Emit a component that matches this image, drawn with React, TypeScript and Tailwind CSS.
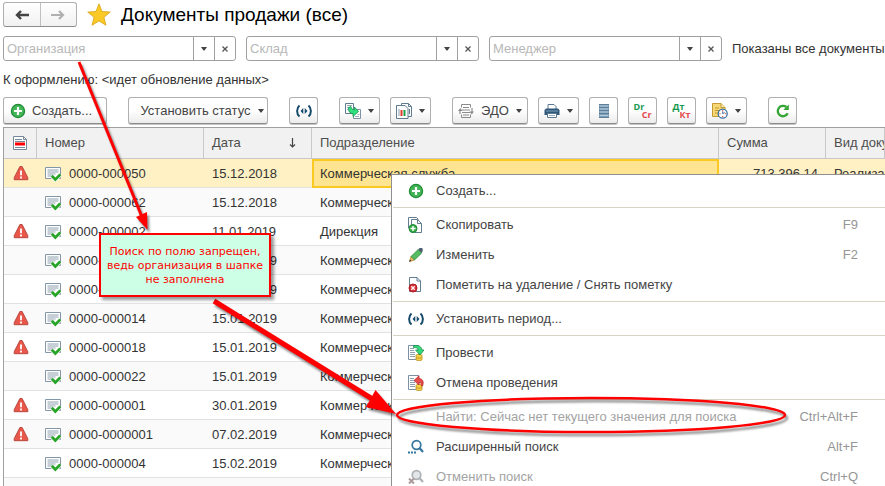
import React from "react";

type IconProps = { className?: string };

function Plus({ className = "size-4" }: IconProps) {
  return (
    <svg viewBox="0 0 16 16" className={className} aria-hidden="true">
      <circle cx="8" cy="8" r="6.6" fill="#43b556" stroke="#1f8b35" strokeWidth="1.2" />
      <path d="M8 4v8M4 8h8" stroke="#fff" strokeWidth="2.2" />
    </svg>
  );
}

function Period({ className = "size-4" }: IconProps) {
  return (
    <svg viewBox="0 0 16 16" className={className} aria-hidden="true">
      <path d="M3.5 2.500C.3 5.200.3 10.800 3.500 13.500M12.500 2.500C15.700 5.200 15.700 10.800 12.500 13.500" fill="none" stroke="#154a6b" strokeWidth="2" />
      <path d="M7.300 5v6L4.500 8zM8.700 5v6L11.500 8z" fill="#154a6b" />
    </svg>
  );
}

function CreateFrom() {
  return (
    <svg viewBox="0 0 16 16" className="size-4" aria-hidden="true">
      <path d="M.5.500h8v10h-8z" fill="#fff" stroke="#5f7c92" />
      <path d="M2 2.500h5M2 4.500h3M2 6.500h1" stroke="#9aabb9" />
      <path d="M8.500 6.500h7v9h-7z" fill="#fff" stroke="#7d93a5" />
      <path d="M10 13.500h4M12.500 11.500h2" stroke="#9aabb9" />
      <path d="M3.500 4.500c0 4 1 6 4.500 6v3l5.500-5L9.500 4v2.700C7.500 6.700 6 6 6 3.500z" fill="#2fe07c" stroke="#14914c" strokeWidth=".8" />
    </svg>
  );
}

function Reports() {
  return (
    <svg viewBox="0 0 16 16" className="size-4" aria-hidden="true">
      <path d="M5.500.500h7l3 3v10h-10z" fill="#fff" stroke="#5f7c92" />
      <path d="M12.500.500v3h3M13.500 6v5" fill="none" stroke="#5f7c92" />
      <path d="M.5 2.500h8.500l3 3v10H.5z" fill="#fff" stroke="#5f7c92" />
      <path d="M3 6v7" stroke="#8a9aa8" />
      <path d="M5.500 7v6" stroke="#e23b2e" strokeWidth="2" />
      <path d="M8.500 7v6" stroke="#1f9e49" strokeWidth="2" />
    </svg>
  );
}

function Exchange() {
  return (
    <svg viewBox="0 0 16 16" className="size-4" aria-hidden="true">
      <path d="M3.500 4.500v-3h9v3M12.500 11.500v3h-9v-3" fill="none" stroke="#8b8b8b" />
      <path d="M5 4.500h6M4 7h8M4 9.500h8M5 12h6" stroke="#8b8b8b" />
      <path d="M2 11V7.500M14 5v4" stroke="#8b8b8b" strokeWidth="1.200" />
      <path d="M0 8l2.300-3L4.600 8zM11.500 8.500h4.500l-2.200 3z" fill="#8b8b8b" />
    </svg>
  );
}

function Printer() {
  return (
    <svg viewBox="0 0 16 16" className="size-4" aria-hidden="true">
      <path d="M4 6V1.500h6l2 2V6" fill="#fff" stroke="#5b7a92" />
      <path d="M2 5.500h12l1.500 1.500v5h-15V7z" fill="#2f587a" />
      <path d="M2 8h12" stroke="#7fa0b8" />
      <path d="M3.500 10.500h9v4h-9z" fill="#fff" stroke="#5b7a92" />
      <path d="M5 12.500h6" stroke="#9aabb9" />
    </svg>
  );
}

function Registry() {
  return (
    <svg viewBox="0 0 16 16" className="size-4" aria-hidden="true">
      <path d="M3 1h10v14H3z" fill="#7d9fb8" />
      <path d="M3 1.500h10M3 4.500h10M3 7.500h10M3 10.500h10M3 14.500h10" stroke="#5b7f9a" />
      <path d="M4 3h8M4 6h8M4 9h8M4 12.500h8" stroke="#b5cbda" />
    </svg>
  );
}

function Schedule() {
  return (
    <svg viewBox="0 0 16 16" className="size-4" aria-hidden="true">
      <path d="M.5.500h8.500l4 4v9H.5z" fill="#f7d873" stroke="#c49a35" />
      <path d="M9 .5v4h4" fill="#fff0b5" stroke="#c49a35" />
      <path d="M3 5h4M3 7.500h5M3 10h3" stroke="#c49a35" />
      <circle cx="10.700" cy="10.700" r="4.500" fill="#fff" stroke="#3b72a5" strokeWidth="1.300" />
      <path d="M10.700 10.700V8.300M10.700 10.700l2-1.200" stroke="#3b72a5" />
      <path d="M7.500 10.200h1v1h-1zM12.900 10.200h1v1h-1zM10.200 13h1v1h-1zM10.200 7.300h1v1h-1z" fill="#e3342f" />
    </svg>
  );
}

function Refresh() {
  return (
    <svg viewBox="0 0 16 16" className="size-4" aria-hidden="true">
      <path d="M12.700 10.200A5.200 5.200 0 1 1 11.300 4" fill="none" stroke="#35a535" strokeWidth="2.300" />
      <path d="M13.800 1.500V7H8.300z" fill="#35a535" />
    </svg>
  );
}

function Warning() {
  return (
    <svg viewBox="0 0 16 16" className="mx-auto size-4" aria-hidden="true">
      <path d="M6.900 1.500h2.200l5.700 11.200v2H1.200v-2z" fill="#e8574a" stroke="#b8483e" strokeLinejoin="round" />
      <path d="M8 5.500v4.800M8 11.500v2" stroke="#fff" strokeWidth="1.800" />
    </svg>
  );
}

function Posted() {
  return (
    <svg viewBox="0 0 16 16" className="size-4 shrink-0" aria-hidden="true">
      <path d="M.5 1.500h15v11H.5z" fill="#fff" stroke="#8396a6" />
      <path d="M2.500 4h11M2.500 6h11M2.500 8h8M2.500 10h5" stroke="#8fa0ae" />
      <path d="M7 9.800l3.200 3.700 4.800-5" fill="none" stroke="#fff" strokeWidth="4.500" />
      <path d="M6.800 9.800l3.500 3.700 5-5" fill="none" stroke="#28a428" strokeWidth="2.700" />
    </svg>
  );
}

function DocMark() {
  return (
    <svg viewBox="0 0 16 16" className="mx-auto size-4" aria-hidden="true">
      <path d="M1.500 1.500h10l3 3v10h-13z" fill="#fff" stroke="#76899a" />
      <path d="M11.500 1.500v3h3" fill="none" stroke="#76899a" />
      <path d="M3 4.500h7M3 6.500h10M3 12.500h10" stroke="#76899a" />
      <path d="M3 9h10" stroke="#f00" strokeWidth="3" />
    </svg>
  );
}

function Copy() {
  return (
    <svg viewBox="0 0 16 16" className="size-4" aria-hidden="true">
      <path d="M.5 11V.5h8l2 2" fill="#fff" stroke="#647d91" />
      <path d="M3.500 2.500h6l4 4v9H3.500z" fill="#fff" stroke="#647d91" />
      <path d="M9.500 2.500v4h4" fill="none" stroke="#647d91" />
      <circle cx="5" cy="11.500" r="4" fill="#36aa4a" stroke="#1f8b35" />
      <path d="M5 9v5M2.500 11.500h5" stroke="#fff" strokeWidth="1.400" />
    </svg>
  );
}

function Pencil() {
  return (
    <svg viewBox="0 0 16 16" className="size-4" aria-hidden="true">
      <path d="M1.500 14.500l1.500-5 3.500 3.500z" fill="#f3bd62" stroke="#b87a2a" strokeWidth=".7" />
      <path d="M3 9.500l7.200-7 3.500 3.500-7.200 7z" fill="#56bb62" stroke="#2f8d3e" strokeWidth=".8" />
      <path d="M10.200 2.500l1.500-1.500h2.200l.8.800v2.200L13.700 6z" fill="#4b5f70" />
      <path d="M1.200 14.800l.7-2.300 1.600 1.600z" fill="#333" />
    </svg>
  );
}

function MarkDelete() {
  return (
    <svg viewBox="0 0 16 16" className="size-4" aria-hidden="true">
      <path d="M1.500.500h7.500l3.500 3.500v10.500h-11z" fill="#fff" stroke="#647d91" />
      <path d="M9 .5V4h3.500" fill="none" stroke="#647d91" />
      <circle cx="5" cy="11" r="4" fill="#da3036" stroke="#a81c25" />
      <path d="M3.300 9.300l3.400 3.400M6.700 9.300l-3.400 3.400" stroke="#fff" strokeWidth="1.300" />
    </svg>
  );
}

function Post({ undo = false }: { undo?: boolean }) {
  return (
    <svg viewBox="0 0 16 16" className="size-4" aria-hidden="true">
      <path d="M.5.500h10v14H.5z" fill="#fff" stroke="#7b8fa0" />
      <path d="M2 3.500h4M2 5.500h4M2 7.500h5M2 9.500h5M2 11.500h5" stroke="#8fa0ae" />
      <path d="M8 10.500c0-1.600 6-1.600 6 0V14.500c0 1.600-6 1.600-6 0z" fill="#f5cf45" stroke="#bd9220" strokeWidth=".8" />
      <path d="M8 12.500c1 .9 5 .9 6 0" fill="none" stroke="#bd9220" strokeWidth=".8" />
      {undo ? (
        <path d="M14.500 11c1.600-4 .3-7.300-3.500-7.500V.8L6 5.500l5 4.500V7.500c2 0 2.800 1 2.300 3.500z" fill="#e94b4b" stroke="#b72a2e" strokeWidth=".8" />
      ) : (
        <path d="M5.500.6c5-.8 8.200.9 8.500 4.400h2L12 10 7.500 5h2.700C9.900 3 8.700 2.400 5.500 2.600z" fill="#35d97c" stroke="#14914c" strokeWidth=".8" />
      )}
    </svg>
  );
}

function Search({ off = false }: { off?: boolean }) {
  const line = off ? "#aeb3b8" : "#3576a0";
  return (
    <svg viewBox="0 0 16 16" className="size-4" aria-hidden="true">
      <circle cx="8.500" cy="6" r="4.300" fill={off ? "#e3e5e7" : "#fff"} stroke={line} strokeWidth="1.700" />
      <path d="M11.500 9l3.500 4" stroke={line} strokeWidth="2.200" />
      {off ? (
        <path d="M1 9.500l5 5M6 9.500l-5 5" stroke="#ad9a9a" strokeWidth="2" />
      ) : (
        <path d="M0 13.500h2M3 13.500h2M6 13.500h2" stroke={line} strokeWidth="2" />
      )}
    </svg>
  );
}

function Caret() {
  return (
    <svg viewBox="0 0 6 4" className="h-1 w-1.5 shrink-0" aria-hidden="true">
      <path d="M0 0h6L3.500 3.500h-1z" fill="#444" />
    </svg>
  );
}

const buttonLook =
  "flex h-[27px] shrink-0 items-center justify-center rounded-[3px] border border-[#b0b0b0] border-b-[#8c8c8c] bg-linear-to-b from-white from-50% to-[#ececec] text-[#444] shadow-[0_1px_0_#c4c4c4]";

function IconButton({ label, children }: { label: string; children: React.ReactNode }) {
  return (
    <button type="button" aria-label={label} className={buttonLook + " w-[29px]"}>
      {children}
    </button>
  );
}

function DropButton({ label, children }: { label: string; children: React.ReactNode }) {
  return (
    <button type="button" aria-label={label} className={buttonLook + " w-[41px] gap-[7px]"}>
      {children}
      <Caret />
    </button>
  );
}

function Filter({ label }: { label: string }) {
  return (
    <div className="flex h-[25px] w-[233px] shrink-0 rounded-[3px] border border-[#a0a0a0] bg-white">
      <input
        aria-label={label}
        placeholder={label}
        className="min-w-0 flex-1 bg-transparent px-[3px] outline-none placeholder:text-[#b8b8b8]"
      />
      <button type="button" aria-label={label + ": выбрать"} className="flex w-[21px] items-center justify-center border-l border-[#a0a0a0]">
        <Caret />
      </button>
      <button type="button" aria-label={label + ": очистить"} className="flex w-[21px] items-center justify-center border-l border-[#a0a0a0]">
        <svg viewBox="0 0 6 6" className="size-1.5" aria-hidden="true">
          <path d="M.5.500l5 5M5.500.500l-5 5" stroke="#555" strokeWidth="1.300" />
        </svg>
      </button>
    </div>
  );
}

const rows = [
  { warn: true, number: "0000-000050", date: "15.12.2018", unit: "Коммерческая служба", sum: "713 396,14", kind: "Реализация" },
  { warn: false, number: "0000-000062", date: "15.12.2018", unit: "Коммерческая служба" },
  { warn: true, number: "0000-000002", date: "11.01.2019", unit: "Дирекция" },
  { warn: false, number: "0000-000003", date: "15.01.2019", unit: "Коммерческая служба" },
  { warn: false, number: "0000-000010", date: "15.01.2019", unit: "Коммерческая служба" },
  { warn: true, number: "0000-000014", date: "15.01.2019", unit: "Коммерческая служба" },
  { warn: true, number: "0000-000018", date: "15.01.2019", unit: "Коммерческая служба" },
  { warn: false, number: "0000-000022", date: "15.01.2019", unit: "Коммерческая служба" },
  { warn: true, number: "0000-000001", date: "30.01.2019", unit: "Коммерческая служба" },
  { warn: true, number: "0000-0000001", date: "07.02.2019", unit: "Коммерческая служба" },
  { warn: false, number: "0000-000004", date: "15.02.2019", unit: "Коммерческая служба" },
];

type Item = { text: string; keys?: string; icon?: React.ReactNode; off?: boolean };

const menu: Item[][] = [
  [{ text: "Создать...", icon: <Plus /> }],
  [
    { text: "Скопировать", keys: "F9", icon: <Copy /> },
    { text: "Изменить", keys: "F2", icon: <Pencil /> },
    { text: "Пометить на удаление / Снять пометку", icon: <MarkDelete /> },
  ],
  [{ text: "Установить период...", icon: <Period /> }],
  [
    { text: "Провести", icon: <Post /> },
    { text: "Отмена проведения", icon: <Post undo /> },
  ],
  [
    { text: "Найти: Сейчас нет текущего значения для поиска", keys: "Ctrl+Alt+F", off: true },
    { text: "Расширенный поиск", keys: "Alt+F", icon: <Search /> },
    { text: "Отменить поиск", keys: "Ctrl+Q", icon: <Search off />, off: true },
  ],
];

const th = "overflow-hidden border-r border-b border-[#c8c8c8] px-2 text-left font-normal";
const td = "overflow-hidden border-b border-[#e2e2e2] px-2 pt-0.5";

function DocumentTable() {
  return (
    <table className="w-full table-fixed border-separate border-spacing-0 border-t border-l border-[#a0a0a0] whitespace-nowrap">
      <colgroup>
        <col className="w-[33px]" />
        <col className="w-[167px]" />
        <col className="w-[108px]" />
        <col className="w-[407px]" />
        <col className="w-[107px]" />
        <col />
      </colgroup>
      <thead>
        <tr className="h-[31px] bg-[#f1f1f1] text-[#4d4d4d]">
          <th className="border-r border-b border-[#c8c8c8] p-0" aria-label="Состояние"><DocMark /></th>
          <th className={th}>Номер</th>
          <th className={th}>
            <span className="flex items-center justify-between">
              Дата
              <svg viewBox="0 0 7 10" className="mr-[7px] h-2.5 w-[7px]" aria-hidden="true">
                <path d="M3.500 0v9M1 6.500l2.500 2.500L6 6.500" fill="none" stroke="#444" strokeWidth="1.200" />
              </svg>
            </span>
          </th>
          <th className={th}>Подразделение</th>
          <th className={th}>Сумма</th>
          <th className={th}>Вид документа</th>
        </tr>
      </thead>
      <tbody>
        {rows.map((row, i) => (
          <tr
            key={row.number}
            className={
              "h-[29px] " + (i === 0 ? "bg-[#fff1c4]" : i % 2 ? "bg-[#fafafa]" : "bg-white")
            }
          >
            <td className="border-b border-[#e2e2e2] p-0">{row.warn && <Warning />}</td>
            <td className={td}>
              <span className="flex items-center gap-2">
                <Posted />
                {row.number}
              </span>
            </td>
            <td className={td}>{row.date}</td>
            <td className={i === 0 ? "border-2 border-[#fcc923] bg-[#ffe591] px-1.5" : td}>{row.unit}</td>
            <td className={td + " text-right"}>{row.sum}</td>
            <td className={td}>{row.kind}</td>
          </tr>
        ))}
        <tr className="h-[29px] bg-[#fafafa]">
          <td colSpan={6} />
        </tr>
      </tbody>
    </table>
  );
}

function ContextMenu() {
  return (
    <div role="menu" className="absolute top-[174px] right-0 left-[391px] border-t border-l border-[#8f8f8f] bg-white">
      {menu.map((group, i) => (
        <div key={i}>
          {i > 0 && <div role="separator" className="my-px ml-px h-0.5 border-b border-[#d8d4c4]" />}
          {group.map((item) => (
            <button
              key={item.text}
              type="button"
              role="menuitem"
              disabled={item.off}
              className={"flex h-[30px] w-full items-center pt-0.5 pr-[27px] pl-4 " + (item.off ? "text-[#a3a3a3]" : "text-[#444]")}
            >
              <span className="w-7 shrink-0">{item.icon}</span>
              <span>{item.text}</span>
              <span className="ml-auto text-[#969696]">{item.keys}</span>
            </button>
          ))}
        </div>
      ))}
    </div>
  );
}

function Annotations() {
  return (
    <>
      <svg viewBox="0 0 885 486" className="pointer-events-none absolute top-0 left-0 h-[486px] w-[885px] drop-shadow-[2px_3px_1px_rgba(0,0,0,0.45)]" aria-hidden="true">
        <path d="M79 62L142 217" stroke="#f00" strokeWidth="3" />
        <path d="M147.500 230L136 217l11-5z" fill="#f00" />
        <path d="M214 301L374 400" stroke="#f00" strokeWidth="5" />
        <path d="M396 414L366 407l9.500-17z" fill="#f00" />
        <ellipse cx="591" cy="415" rx="194" ry="17" fill="none" stroke="#f00" strokeWidth="2.500" />
      </svg>
      <div className="absolute top-[233px] left-[99px] h-16 w-[172px] border-2 border-[#f00] bg-[#ccffe5] pt-2.5 text-center font-['DejaVu_Sans',sans-serif] text-[11px] leading-[14px] text-[#f00] shadow-[3px_3px_3px_rgba(0,0,0,0.4)]">
        Поиск по полю запрещен,
        <br />
        ведь организация в шапке
        <br />
        не заполнена
      </div>
    </>
  );
}

export default function App() {
  return (
    <div className="relative h-screen overflow-hidden bg-white font-['Liberation_Sans',Arial,sans-serif] text-[13px] leading-4 text-[#333]">
      <main className="pl-[3px]">
        <header className="flex h-[27px] items-center pt-0.5">
          <div className="flex h-[25px] w-[74px] rounded-[3px] border border-[#b0b0b0] border-b-[#8c8c8c] bg-linear-to-b from-white to-[#f1f1f1]">
            <button type="button" aria-label="Назад" className="flex flex-1 items-center justify-center border-r border-[#c0c0c0]">
              <svg viewBox="0 0 14 10" className="h-2.5 w-3.5" aria-hidden="true">
                <path d="M14 5H3M6 1L2 5l4 4" fill="none" stroke="#444" strokeWidth="2.400" />
              </svg>
            </button>
            <button type="button" aria-label="Вперед" className="flex flex-1 items-center justify-center">
              <svg viewBox="0 0 14 10" className="h-2.5 w-3.5" aria-hidden="true">
                <path d="M0 5h11M8 1l4 4-4 4" fill="none" stroke="#b0b0b0" strokeWidth="2.200" />
              </svg>
            </button>
          </div>
          <svg viewBox="0 0 22 22" className="ml-2.5 size-6" aria-hidden="true">
            <path d="M11 .8l2.800 7 7.500.5-5.800 4.800 1.900 7.300L11 16.400l-6.400 4 1.900-7.300L.7 8.300l7.500-.5z" fill="#fbc926" stroke="#d9a81c" strokeWidth=".8" />
          </svg>
          <h1 className="ml-2.5 text-[19px] leading-6 text-black">Документы продажи (все)</h1>
        </header>

        <div className="mt-[9px] flex items-center gap-2.5 whitespace-nowrap">
          <Filter label="Организация" />
          <Filter label="Склад" />
          <Filter label="Менеджер" />
          <span>Показаны все документы</span>
        </div>

        <p className="mt-[11px]">К оформлению: &lt;идет обновление данных&gt;</p>

        <div className="mt-[9px] flex gap-[21px]">
          <button type="button" className={buttonLook + " w-[104px] gap-1.5 pr-2"}>
            <Plus />
            Создать...
          </button>
          <button type="button" className={buttonLook + " w-[140px] gap-[7px] pl-2"}>
            Установить статус
            <Caret />
          </button>
          <IconButton label="Установить период"><Period /></IconButton>
          <div className="flex gap-2.5">
            <DropButton label="Создать на основании"><CreateFrom /></DropButton>
            <DropButton label="Отчеты"><Reports /></DropButton>
          </div>
          <div className="flex gap-2.5">
            <button type="button" className={buttonLook + " w-[76px] gap-[7px]"}>
              <Exchange />
              ЭДО
              <Caret />
            </button>
            <DropButton label="Печать"><Printer /></DropButton>
            <IconButton label="Реестр"><Registry /></IconButton>
            <IconButton label="Проводки Dr Cr">
              <span className="flex w-[18px] flex-col font-['Open_Sans',sans-serif] text-[9px] leading-[8px] font-bold">
                <span className="text-left text-[#179a50]">Dr</span>
                <span className="text-right text-[#e5484d]">Cr</span>
              </span>
            </IconButton>
            <IconButton label="Проводки Дт Кт">
              <span className="flex w-[18px] flex-col font-['Open_Sans',sans-serif] text-[9px] leading-[8px] font-bold">
                <span className="text-left text-[#179a50]">Дт</span>
                <span className="text-right text-[#e5484d]">Кт</span>
              </span>
            </IconButton>
            <DropButton label="График"><Schedule /></DropButton>
          </div>
          <IconButton label="Обновить"><Refresh /></IconButton>
        </div>

        <div className="mt-[3px]">
          <DocumentTable />
        </div>
      </main>
      <ContextMenu />
      <Annotations />
    </div>
  );
}
